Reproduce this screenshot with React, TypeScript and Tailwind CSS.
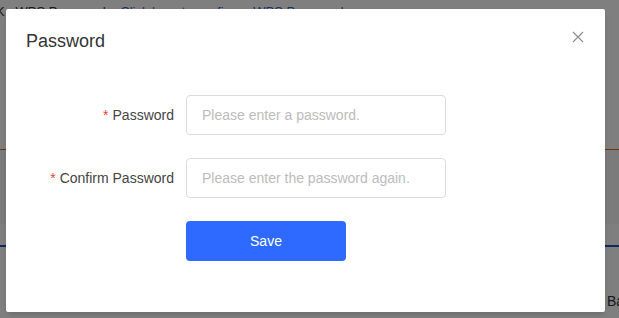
import React from "react";

export default function App() {
  const font = { fontFamily: '"Liberation Sans", Arial, sans-serif' };
  return (
    <div className="relative w-[619px] h-[318px] overflow-hidden bg-white" style={font}>
      {/* underlying page */}
      <div className="flex flex-col h-full">
        <div className="h-[149px] pt-[4px] text-[13px] leading-[16px] text-[#333] whitespace-nowrap overflow-hidden">
          <div className="-ml-[4px]">
            <span className="text-[#333]">K&nbsp;&nbsp;&nbsp;WPS Password:&nbsp;&nbsp;&nbsp;</span>
            <span className="text-[#2f5de0]">Click here to configure WPS Password</span>
          </div>
        </div>
        <div className="h-[1px] bg-[#e06a00]" />
        <div className="h-[74px] bg-[#f7f7f7]" />
        <div className="h-[21px] bg-[#ffffff]" />
        <div className="h-[2px] bg-[#2050c0]" />
        <div className="flex-1 flex justify-end items-end pb-[6px]">
          <span className="text-[14px] text-[#333] w-[12px] overflow-hidden whitespace-nowrap">Ba</span>
        </div>
      </div>
      {/* overlay */}
      <div className="absolute inset-0 bg-black/50" />
      {/* modal */}
      <div className="absolute left-[6px] top-[9px] w-[599px] h-[303px] bg-white rounded-[2px] shadow-md">
        <div className="pl-[20px] pt-[20px] text-[18px] leading-[24px] text-[#333]">Password</div>
        <button className="absolute right-[21px] top-[22px] w-[12px] h-[12px] flex items-center justify-center">
          <svg width="12" height="12" viewBox="0 0 12 12">
            <path d="M1 1 L11 11 M11 1 L1 11" stroke="#8c8c8c" strokeWidth="1.1" fill="none" />
          </svg>
        </button>
        <div className="mt-[42px] flex flex-col gap-[23px]">
          <div className="flex items-center">
            <label className="w-[168px] text-right text-[14px] text-[#444]">
              <span className="text-[#f04134] mr-[4px]">*</span>Password
            </label>
            <input
              className="ml-[12px] w-[260px] h-[40px] border border-[#dcdcdc] rounded-[4px] px-[15px] text-[14px] outline-none placeholder:text-[#bcbcbc]"
              placeholder="Please enter a password."
              style={font}
            />
          </div>
          <div className="flex items-center">
            <label className="w-[168px] text-right text-[14px] text-[#444]">
              <span className="text-[#f04134] mr-[4px]">*</span>Confirm Password
            </label>
            <input
              className="ml-[12px] w-[260px] h-[40px] border border-[#dcdcdc] rounded-[4px] px-[15px] text-[14px] outline-none placeholder:text-[#bcbcbc]"
              placeholder="Please enter the password again."
              style={font}
            />
          </div>
          <div className="flex">
            <button
              className="ml-[180px] w-[160px] h-[40px] rounded-[4px] bg-[#2e6aff] text-white text-[14px]"
              style={font}
            >
              Save
            </button>
          </div>
        </div>
      </div>
    </div>
  );
}
